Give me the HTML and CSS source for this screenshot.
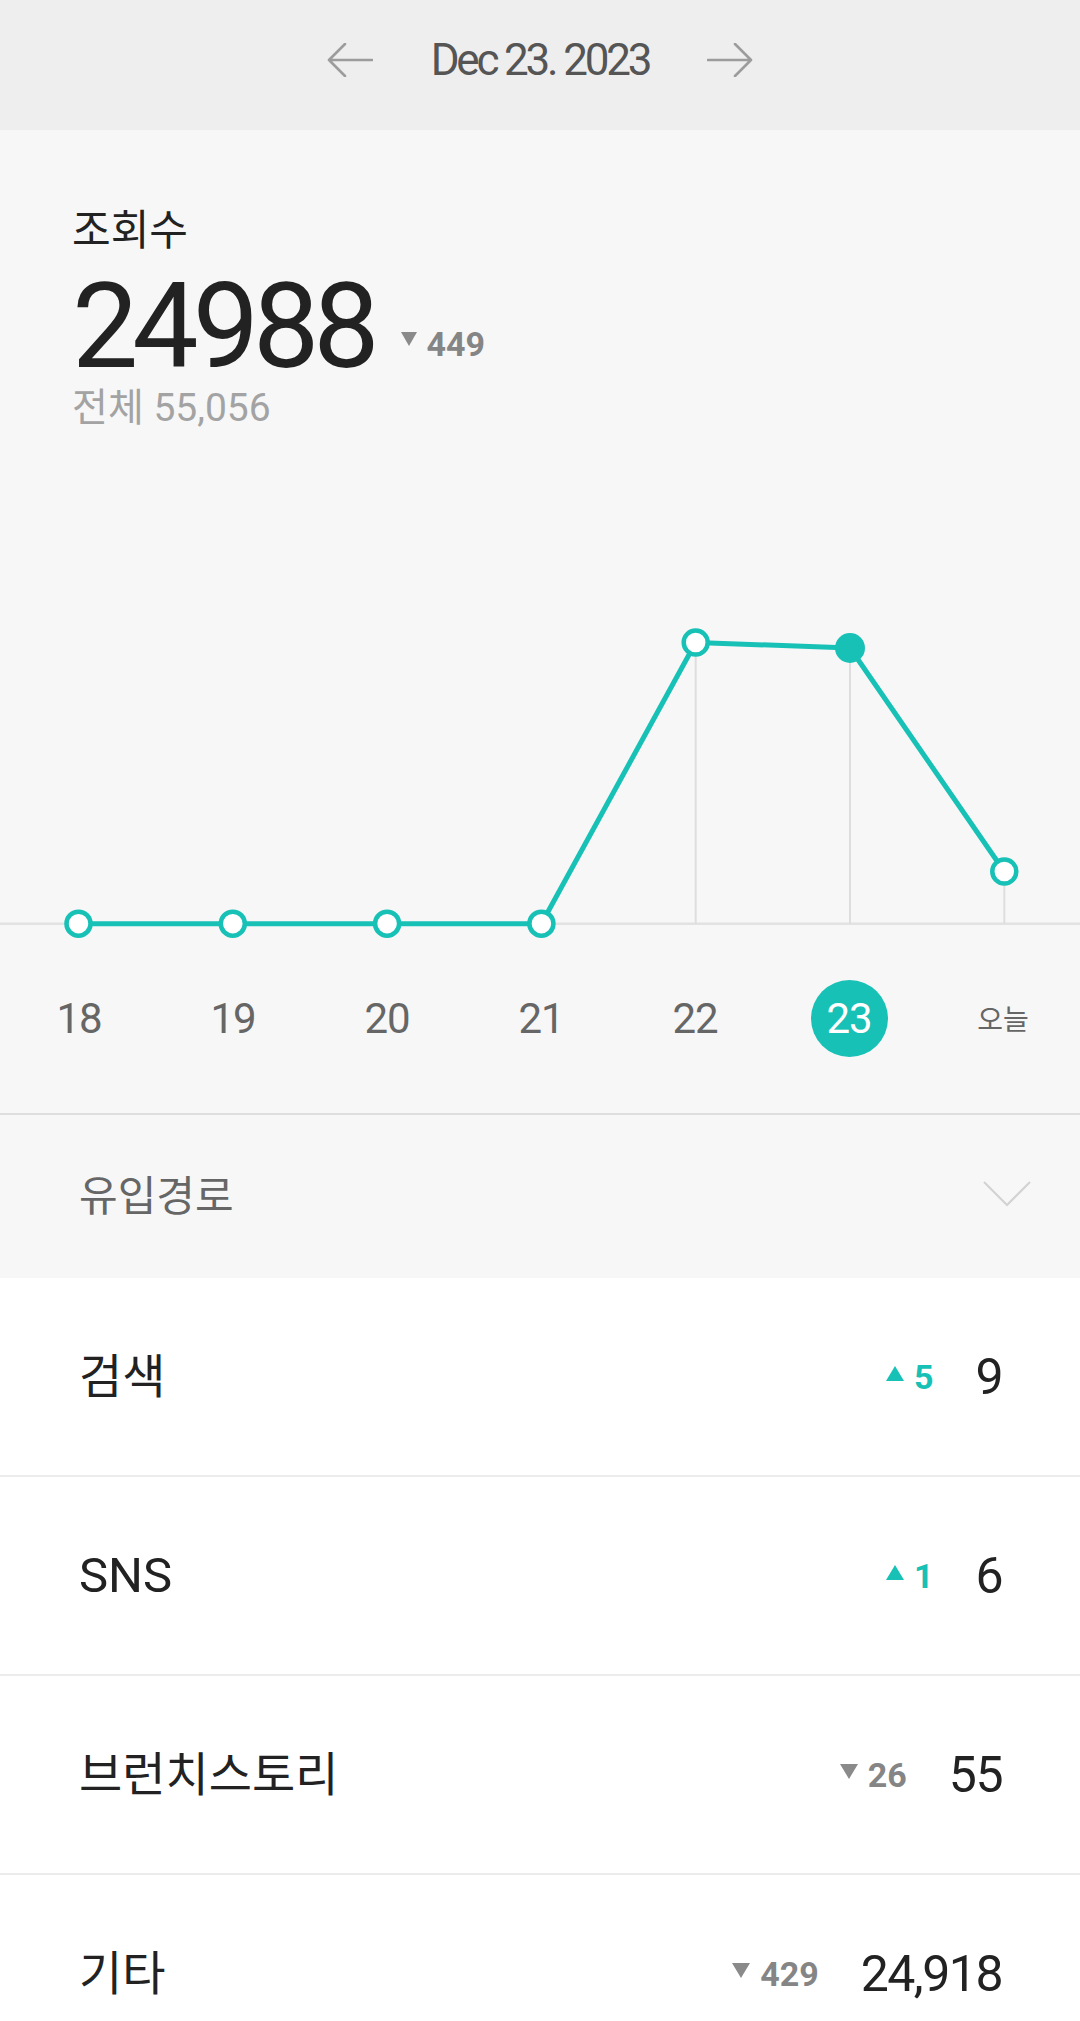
FILE: index.html
```html
<!DOCTYPE html>
<html lang="ko">
<head>
<meta charset="utf-8">
<title>조회수 통계</title>
<link rel="stylesheet" href="styles.css">
</head>
<body>
<header class="datebar">
  <svg class="nav-arrow" width="46" height="34" viewBox="0 0 46 34"><path d="M18 1 L2 17 L18 33 M2 17 H45" fill="none" stroke="#9c9c9c" stroke-width="2.6" stroke-linecap="round" stroke-linejoin="round"/></svg>
  <span class="date">Dec 23. 2023</span>
  <svg class="nav-arrow" width="46" height="34" viewBox="0 0 46 34"><path d="M28 1 L44 17 L28 33 M44 17 H1" fill="none" stroke="#9c9c9c" stroke-width="2.6" stroke-linecap="round" stroke-linejoin="round"/></svg>
</header>

<section class="stats">
  <div class="summary">
    <div class="summary-label">조회수</div>
    <div class="headline">
      <span class="big-number">24988</span>
      <span class="delta delta-down delta-head">
        <svg class="tri" width="16" height="14" viewBox="0 0 16 14"><path d="M0 0 H16 L8 14 Z" fill="#8a8a8a"/></svg>
        <span class="delta-num">449</span>
      </span>
    </div>
    <div class="summary-total">전체 55,056</div>
  </div>

  <svg class="chart" width="1080" height="510" viewBox="0 0 1080 510">
    <line x1="0" y1="493.7" x2="1080" y2="493.7" stroke="#e2e2e2" stroke-width="2.5"/>
    <line x1="695.7" y1="212.5" x2="695.7" y2="493.7" stroke="#dedede" stroke-width="2"/>
    <line x1="850" y1="218" x2="850" y2="493.7" stroke="#dedede" stroke-width="2"/>
    <line x1="1004.3" y1="441.5" x2="1004.3" y2="493.7" stroke="#dedede" stroke-width="2"/>
    <polyline points="78.5,493.7 232.8,493.7 387.1,493.7 541.4,493.7 695.7,212.5 850,218 1004.3,441.5" fill="none" stroke="#17c1b6" stroke-width="5" stroke-linejoin="round"/>
    <g fill="#ffffff" stroke="#17c1b6" stroke-width="4.5">
      <circle cx="78.5" cy="493.7" r="12"/>
      <circle cx="232.8" cy="493.7" r="12"/>
      <circle cx="387.1" cy="493.7" r="12"/>
      <circle cx="541.4" cy="493.7" r="12"/>
      <circle cx="695.7" cy="212.5" r="12"/>
      <circle cx="1004.3" cy="441.5" r="12"/>
    </g>
    <circle cx="850" cy="218" r="15" fill="#17c1b6"/>
  </svg>

  <div class="days">
    <div class="day"><span class="day-label">18</span></div>
    <div class="day"><span class="day-label">19</span></div>
    <div class="day"><span class="day-label">20</span></div>
    <div class="day"><span class="day-label">21</span></div>
    <div class="day"><span class="day-label">22</span></div>
    <div class="day"><span class="day-label day-selected">23</span></div>
    <div class="day"><span class="day-label day-today">오늘</span></div>
  </div>
</section>

<section class="source-head">
  <span class="source-title">유입경로</span>
  <svg class="chevron" width="48" height="26" viewBox="0 0 48 26"><path d="M1 1 L24 24 L47 1" fill="none" stroke="#d2d2d2" stroke-width="2"/></svg>
</section>

<ul class="sources">
  <li class="source">
    <span class="source-name">검색</span>
    <span class="source-nums">
      <span class="delta delta-up">
        <svg class="tri" width="18" height="15" viewBox="0 0 18 15"><path d="M0 15 H18 L9 0 Z" fill="#17c1b6"/></svg>
        <span class="delta-num">5</span>
      </span>
      <span class="source-value">9</span>
    </span>
  </li>
  <li class="source">
    <span class="source-name source-name-latin">SNS</span>
    <span class="source-nums">
      <span class="delta delta-up">
        <svg class="tri" width="18" height="15" viewBox="0 0 18 15"><path d="M0 15 H18 L9 0 Z" fill="#17c1b6"/></svg>
        <span class="delta-num">1</span>
      </span>
      <span class="source-value">6</span>
    </span>
  </li>
  <li class="source">
    <span class="source-name">브런치스토리</span>
    <span class="source-nums">
      <span class="delta delta-down">
        <svg class="tri" width="18" height="15" viewBox="0 0 18 15"><path d="M0 0 H18 L9 15 Z" fill="#8a8a8a"/></svg>
        <span class="delta-num">26</span>
      </span>
      <span class="source-value">55</span>
    </span>
  </li>
  <li class="source">
    <span class="source-name">기타</span>
    <span class="source-nums">
      <span class="delta delta-down">
        <svg class="tri" width="18" height="15" viewBox="0 0 18 15"><path d="M0 0 H18 L9 15 Z" fill="#8a8a8a"/></svg>
        <span class="delta-num">429</span>
      </span>
      <span class="source-value">24,918</span>
    </span>
  </li>
</ul>
</body>
</html>
```

FILE: styles.css
```css
* {
  box-sizing: border-box;
}

body {
  margin: 0;
  width: 1080px;
  background: #ffffff;
  font-family: Roboto, "Noto Sans CJK KR", sans-serif;
  color: #222222;
}

/* Date bar */
.datebar {
  height: 130px;
  padding-bottom: 10px;
  background: #eeeeee;
  display: flex;
  align-items: center;
  justify-content: center;
  gap: 58px;
}

.nav-arrow {
  display: block;
}

.date {
  font-size: 44px;
  line-height: 50px;
  letter-spacing: -3.2px;
  color: #555555;
}

/* Stats + chart */
.stats {
  background: #f7f7f7;
  border-bottom: 2px solid #dedede;
}

.summary {
  padding: 77px 0 0 72px;
}

.summary-label {
  font-size: 42px;
  line-height: 48px;
  color: #222222;
}

.headline {
  margin-top: 22px;
  height: 100px;
  display: flex;
  align-items: flex-end;
}

.big-number {
  font-size: 118px;
  line-height: 100px;
  letter-spacing: -6px;
  color: #222222;
}

.delta {
  display: flex;
  align-items: flex-start;
  gap: 10px;
}

.delta .tri {
  display: block;
  margin-top: 6px;
}

.delta-num {
  font-size: 34px;
  line-height: 34px;
  font-weight: 700;
}

.delta-up .delta-num {
  color: #17c1b6;
}

.delta-down .delta-num {
  color: #858585;
}

.delta-head {
  margin-left: 27px;
  margin-bottom: 16px;
}

.delta-head .tri {
  margin-top: 5px;
}

.summary-total {
  margin-top: 10px;
  font-size: 39px;
  line-height: 42px;
  color: #a3a3a3;
}

.chart {
  display: block;
  margin-top: 1px;
}

.days {
  display: grid;
  grid-template-columns: repeat(7, 1fr);
  padding: 40px 0 56px 2px;
}

.day {
  display: flex;
  justify-content: center;
  align-items: center;
  height: 77px;
}

.day-label {
  font-size: 42px;
  line-height: 42px;
  letter-spacing: -1px;
  color: #666666;
}

.day-selected {
  width: 77px;
  height: 77px;
  border-radius: 50%;
  background: #17c1b6;
  color: #ffffff;
  display: flex;
  align-items: center;
  justify-content: center;
}

.day-today {
  font-size: 28px;
  letter-spacing: 0;
  padding-top: 4px;
}

/* Inflow header */
.source-head {
  height: 163px;
  background: #f7f7f7;
  display: flex;
  align-items: center;
  justify-content: space-between;
  padding: 0 49px 0 79px;
}

.source-title {
  font-size: 42px;
  line-height: 48px;
  color: #666666;
}

.chevron {
  display: block;
  margin-top: -6px;
}

/* Inflow rows */
.sources {
  list-style: none;
  margin: 0;
  padding: 0;
}

.source {
  height: 199px;
  display: flex;
  align-items: center;
  justify-content: space-between;
  padding: 0 78px 0 79px;
  border-bottom: 2px solid #ececec;
}

.source-name {
  font-size: 47px;
  line-height: 54px;
  color: #222222;
}

.source-name-latin {
  font-size: 49px;
}

.source-nums {
  display: flex;
  align-items: center;
  gap: 42px;
}

.source-value {
  font-size: 50px;
  line-height: 50px;
  letter-spacing: -1.5px;
  color: #222222;
}
```
